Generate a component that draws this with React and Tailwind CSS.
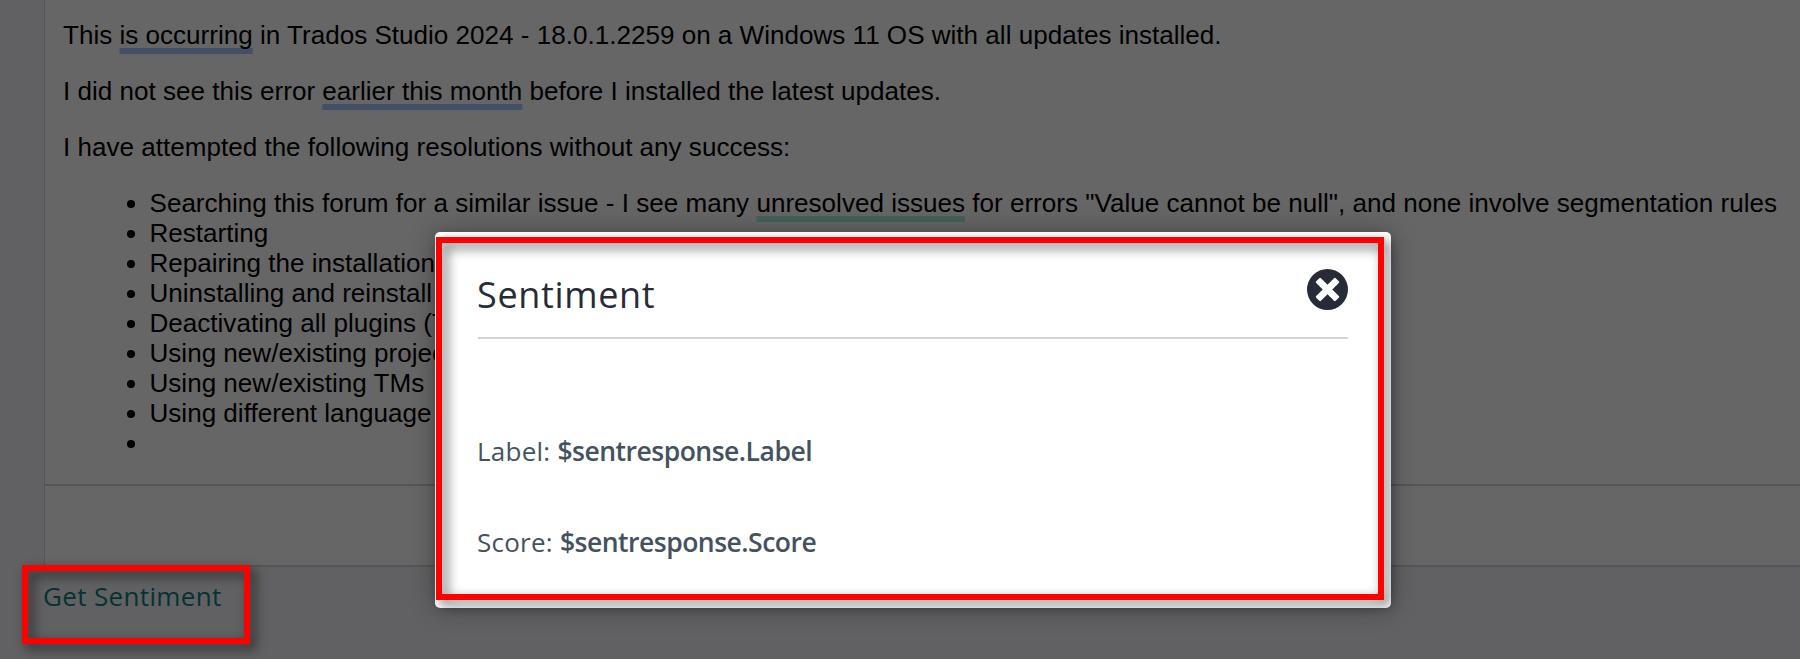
import React from 'react';

const attempts = [
  'Restarting',
  'Repairing the installation',
  'Uninstalling and reinstall',
  'Deactivating all plugins (T',
  'Using new/existing projec',
  'Using new/existing TMs',
  'Using different language',
  '',
];

function Mark({ green, children }) {
  return (
    <span
      className={
        green
          ? 'underline decoration-[6px] underline-offset-[4px] [text-decoration-skip-ink:none] decoration-[#a8f5df]'
          : 'underline decoration-[6px] underline-offset-[4px] [text-decoration-skip-ink:none] decoration-[#a8c6ff]'
      }
    >
      {children}
    </span>
  );
}

function Attempt({ children }) {
  return (
    <li className="flex h-[30px] items-center whitespace-nowrap">
      <span className="mt-[2px] mr-[14.5px] size-[8px] shrink-0 rounded-full bg-black" />
      <span>{children}</span>
    </li>
  );
}

function Post() {
  return (
    <div className="ml-11 h-[567px] border-b-2 border-l border-[#d4d4d8] bg-white text-[26.07px] leading-[30px] text-black font-['Liberation_Sans',Arial,sans-serif]">
      <div className="h-[486px] overflow-hidden border-b-2 border-[#d4d4d8] pt-[20px] pl-[18px] whitespace-nowrap">
        <p className="mb-[26px]">
          This <Mark>is occurring</Mark> in Trados Studio 2024 - 18.0.1.2259 on a Windows 11 OS with all updates installed.
        </p>
        <p className="mb-[26px]">
          I did not see this error <Mark>earlier this month</Mark> before I installed the latest updates.
        </p>
        <p className="mb-[26px]">I have attempted the following resolutions without any success:</p>
        <ul className="pl-[64px]">
          <Attempt>
            Searching this forum for a similar issue - I see many <Mark green>unresolved issues</Mark> for errors "Value cannot be null", and none involve segmentation rules
          </Attempt>
          {attempts.map((text, i) => (
            <Attempt key={i}>{text}</Attempt>
          ))}
        </ul>
      </div>
    </div>
  );
}

function CloseIcon() {
  return (
    <svg viewBox="0 0 41 41" className="size-[41px]">
      <circle cx="20.5" cy="20.5" r="20.5" fill="#272b38" />
      <g fill="#fff" transform="rotate(45 20.5 20.5)">
        <rect x="6.7" y="17.1" width="27.6" height="6.8" rx="1.2" />
        <rect x="17.1" y="6.7" width="6.8" height="27.6" rx="1.2" />
      </g>
    </svg>
  );
}

function SentimentDialog() {
  return (
    <div className="absolute top-[232px] left-[435px] h-[376px] w-[956px] rounded-[5px] bg-white px-[43px] pt-[37px] text-[#44525f] shadow-[0_0_26px_rgba(0,0,0,0.3)]">
      <div className="flex h-[70px] justify-between border-b-2 border-[#d4d4d4]">
        <h2 className="-ml-px pt-[4px] text-[36px] leading-[44px] tracking-[0.65px] text-[#272b38]">Sentiment</h2>
        <button className="h-[41px]" aria-label="Close">
          <CloseIcon />
        </button>
      </div>
      <p className="mt-[92px] -ml-px text-[26px] leading-[40px]">
        <span className="tracking-[0.25px]">Label: </span>
        <strong className="text-[26.5px] font-semibold tracking-[-0.5px]">$sentresponse.Label</strong>
      </p>
      <p className="mt-[51px] -ml-px text-[26px] leading-[40px]">
        <span className="tracking-[0.25px]">Score: </span>
        <strong className="text-[26.5px] font-semibold tracking-[-0.5px]">$sentresponse.Score</strong>
      </p>
    </div>
  );
}

export default function App() {
  return (
    <div className="relative h-[659px] w-[1800px] overflow-hidden bg-[#f3f3f7] font-['Open_Sans','Noto_Sans',sans-serif]">
      <Post />
      <a className="mt-[9px] ml-[43px] block text-[26px] leading-[40px] tracking-[0.35px] text-[#0c8080]">Get Sentiment</a>
      <div className="absolute inset-0 bg-black/60" />
      <SentimentDialog />
      <div className="absolute top-[237px] left-[436px] h-[363px] w-[948px] border-[6px] border-[#ff0000] drop-shadow-[5px_5px_6px_rgba(0,0,0,0.6)]" />
      <div className="absolute top-[565px] left-[22px] h-[79px] w-[228px] border-[6px] border-[#ff0000] drop-shadow-[5px_5px_6px_rgba(0,0,0,0.6)]" />
    </div>
  );
}
